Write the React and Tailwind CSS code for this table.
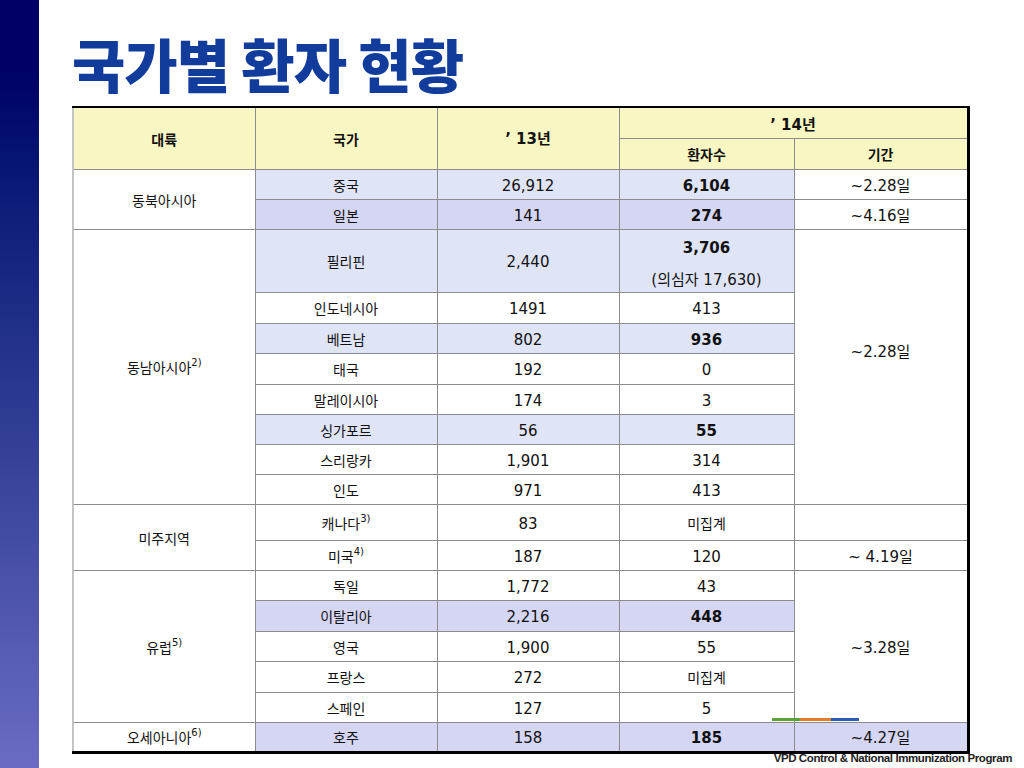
import React from 'react';

const LIGHT = 'bg-[#dfe4f7]';
const DARK = 'bg-[#d5d6f4]';

const ROWS = [
  { h: 'h-[30px]', region: '동북아시아', regionSpan: 2, country: '중국', y13: '26,912', y14: '6,104', bold: true, bg: LIGHT, period: '~2.28일', periodSpan: 1 },
  { h: 'h-[30px]', country: '일본', y13: '141', y14: '274', bold: true, bg: DARK, period: '~4.16일', periodSpan: 1 },
  { h: 'h-[63px]', region: '동남아시아', sup: '2)', regionSpan: 8, country: '필리핀', y13: '2,440', y14: '3,706', note: '(의심자 17,630)', bold: true, bg: LIGHT, period: '~2.28일', periodSpan: 8, periodPad: 'pb-[32px]' },
  { h: 'h-[31px]', country: '인도네시아', y13: '1491', y14: '413' },
  { h: 'h-[30px]', country: '베트남', y13: '802', y14: '936', bold: true, bg: LIGHT },
  { h: 'h-[31px]', country: '태국', y13: '192', y14: '0' },
  { h: 'h-[30px]', country: '말레이시아', y13: '174', y14: '3' },
  { h: 'h-[30px]', country: '싱가포르', y13: '56', y14: '55', bold: true, bg: LIGHT },
  { h: 'h-[30px]', country: '스리랑카', y13: '1,901', y14: '314' },
  { h: 'h-[30px]', country: '인도', y13: '971', y14: '413' },
  { h: 'h-[36px]', region: '미주지역', regionSpan: 2, country: '캐나다', csup: '3)', y13: '83', y14: '미집계', period: '', periodSpan: 1 },
  { h: 'h-[30px]', country: '미국', csup: '4)', y13: '187', y14: '120', period: '~ 4.19일', periodSpan: 1 },
  { h: 'h-[30px]', region: '유럽', sup: '5)', regionSpan: 5, country: '독일', y13: '1,772', y14: '43', period: '~3.28일', periodSpan: 5 },
  { h: 'h-[31px]', country: '이탈리아', y13: '2,216', y14: '448', bold: true, bg: DARK },
  { h: 'h-[30px]', country: '영국', y13: '1,900', y14: '55' },
  { h: 'h-[31px]', country: '프랑스', y13: '272', y14: '미집계' },
  { h: 'h-[30px]', country: '스페인', y13: '127', y14: '5' },
  { h: 'h-[30px]', region: '오세아니아', sup: '6)', regionSpan: 1, country: '호주', y13: '158', y14: '185', bold: true, bg: DARK, period: '~4.27일', periodSpan: 1, periodBg: DARK },
];

const cell = 'border border-[#8c8c8c] text-center align-middle p-0';

export default function App() {
  return (
    <div className="flex w-[1024px] h-[768px] bg-white overflow-hidden" style={{ fontFamily: '"DejaVu Sans", "Noto Sans CJK KR", sans-serif' }}>
      <div className="w-[39px] h-full shrink-0 bg-linear-to-b from-[#000066] from-[9%] to-[#6b6bc3]" />

      <div className="flex flex-col pl-[33px]">
        <h1
          className="h-[106px] pt-[28px] text-[58px] leading-[70px] font-black text-[#113c9b] tracking-[-1px]"
          style={{ fontFamily: '"Noto Sans CJK KR", sans-serif' }}
        >
          국가별 환자 현황
        </h1>

        <div className="relative">
          <table className="table-fixed border-collapse w-[895px] text-[15px] text-[#111] border-t-2 border-t-black border-r-[3px] border-r-black border-b-[3px] border-b-black border-l-2 border-l-[#c4c4c4]">
            <colgroup>
              <col className="w-[182px]" />
              <col className="w-[182px]" />
              <col className="w-[182px]" />
              <col className="w-[175px]" />
              <col className="w-[174px]" />
            </colgroup>
            <thead className="bg-[#f8f7c3] font-bold text-[14px]">
              <tr className="h-[31px]">
                <th rowSpan={2} className={`${cell} pt-1`}>대륙</th>
                <th rowSpan={2} className={`${cell} pt-1`}>국가</th>
                <th rowSpan={2} className={`${cell} text-[15px] pt-0.5`}>’ 13년</th>
                <th colSpan={2} className={`${cell} text-[15px] pt-1`}>’ 14년</th>
              </tr>
              <tr className="h-[31px]">
                <th className={`${cell} pt-1`}>환자수</th>
                <th className={`${cell} pt-1`}>기간</th>
              </tr>
            </thead>
            <tbody>
              {ROWS.map((r, i) => (
                <tr key={i} className={r.h}>
                  {r.region && (
                    <td rowSpan={r.regionSpan} className={`${cell} bg-white text-[14px] pt-1`}>
                      {r.region}
                      {r.sup && <sup className="text-[10px] align-[2px]">{r.sup}</sup>}
                    </td>
                  )}
                  <td className={`${cell} ${r.bg || 'bg-white'} text-[14px] pt-1`}>
                    {r.country}
                    {r.csup && <sup className="text-[10px] align-[2px]">{r.csup}</sup>}
                  </td>
                  <td className={`${cell} ${r.bg || 'bg-white'} pt-1`}>{r.y13}</td>
                  {r.note ? (
                    <td className={`${cell} ${r.bg || 'bg-white'}`}>
                      <div className="flex flex-col gap-[10px] pt-[6px]">
                        <span className="font-bold leading-[22px]">{r.y14}</span>
                        <span className="leading-[22px]">{r.note}</span>
                      </div>
                    </td>
                  ) : (
                    <td className={`${cell} ${r.bg || 'bg-white'} pt-1`}>
                      <span className={r.bold ? 'font-bold' : r.y14 === '미집계' ? 'text-[14px]' : ''}>{r.y14}</span>
                    </td>
                  )}
                  {r.period !== undefined && (
                    <td rowSpan={r.periodSpan} className={`${cell} ${r.periodBg || 'bg-white'} ${r.periodPad || ''} pt-1`}>{r.period}</td>
                  )}
                </tr>
              ))}
            </tbody>
          </table>

          <div className="absolute left-[700px] top-[612px] flex h-[3px]">
            <div className="w-[28px] bg-[#5ba23a]" />
            <div className="w-[31px] bg-[#e27b2b]" />
            <div className="w-[28px] bg-[#2b5db3]" />
          </div>
        </div>

        <div className="flex justify-end w-[940px] -mt-[2px]">
          <span
            className="text-[11.5px] leading-[13px] font-bold text-[#222] tracking-[-0.4px]"
            style={{ fontFamily: '"Liberation Sans", sans-serif' }}
          >
            VPD Control &amp; National Immunization Program
          </span>
        </div>
      </div>
    </div>
  );
}
